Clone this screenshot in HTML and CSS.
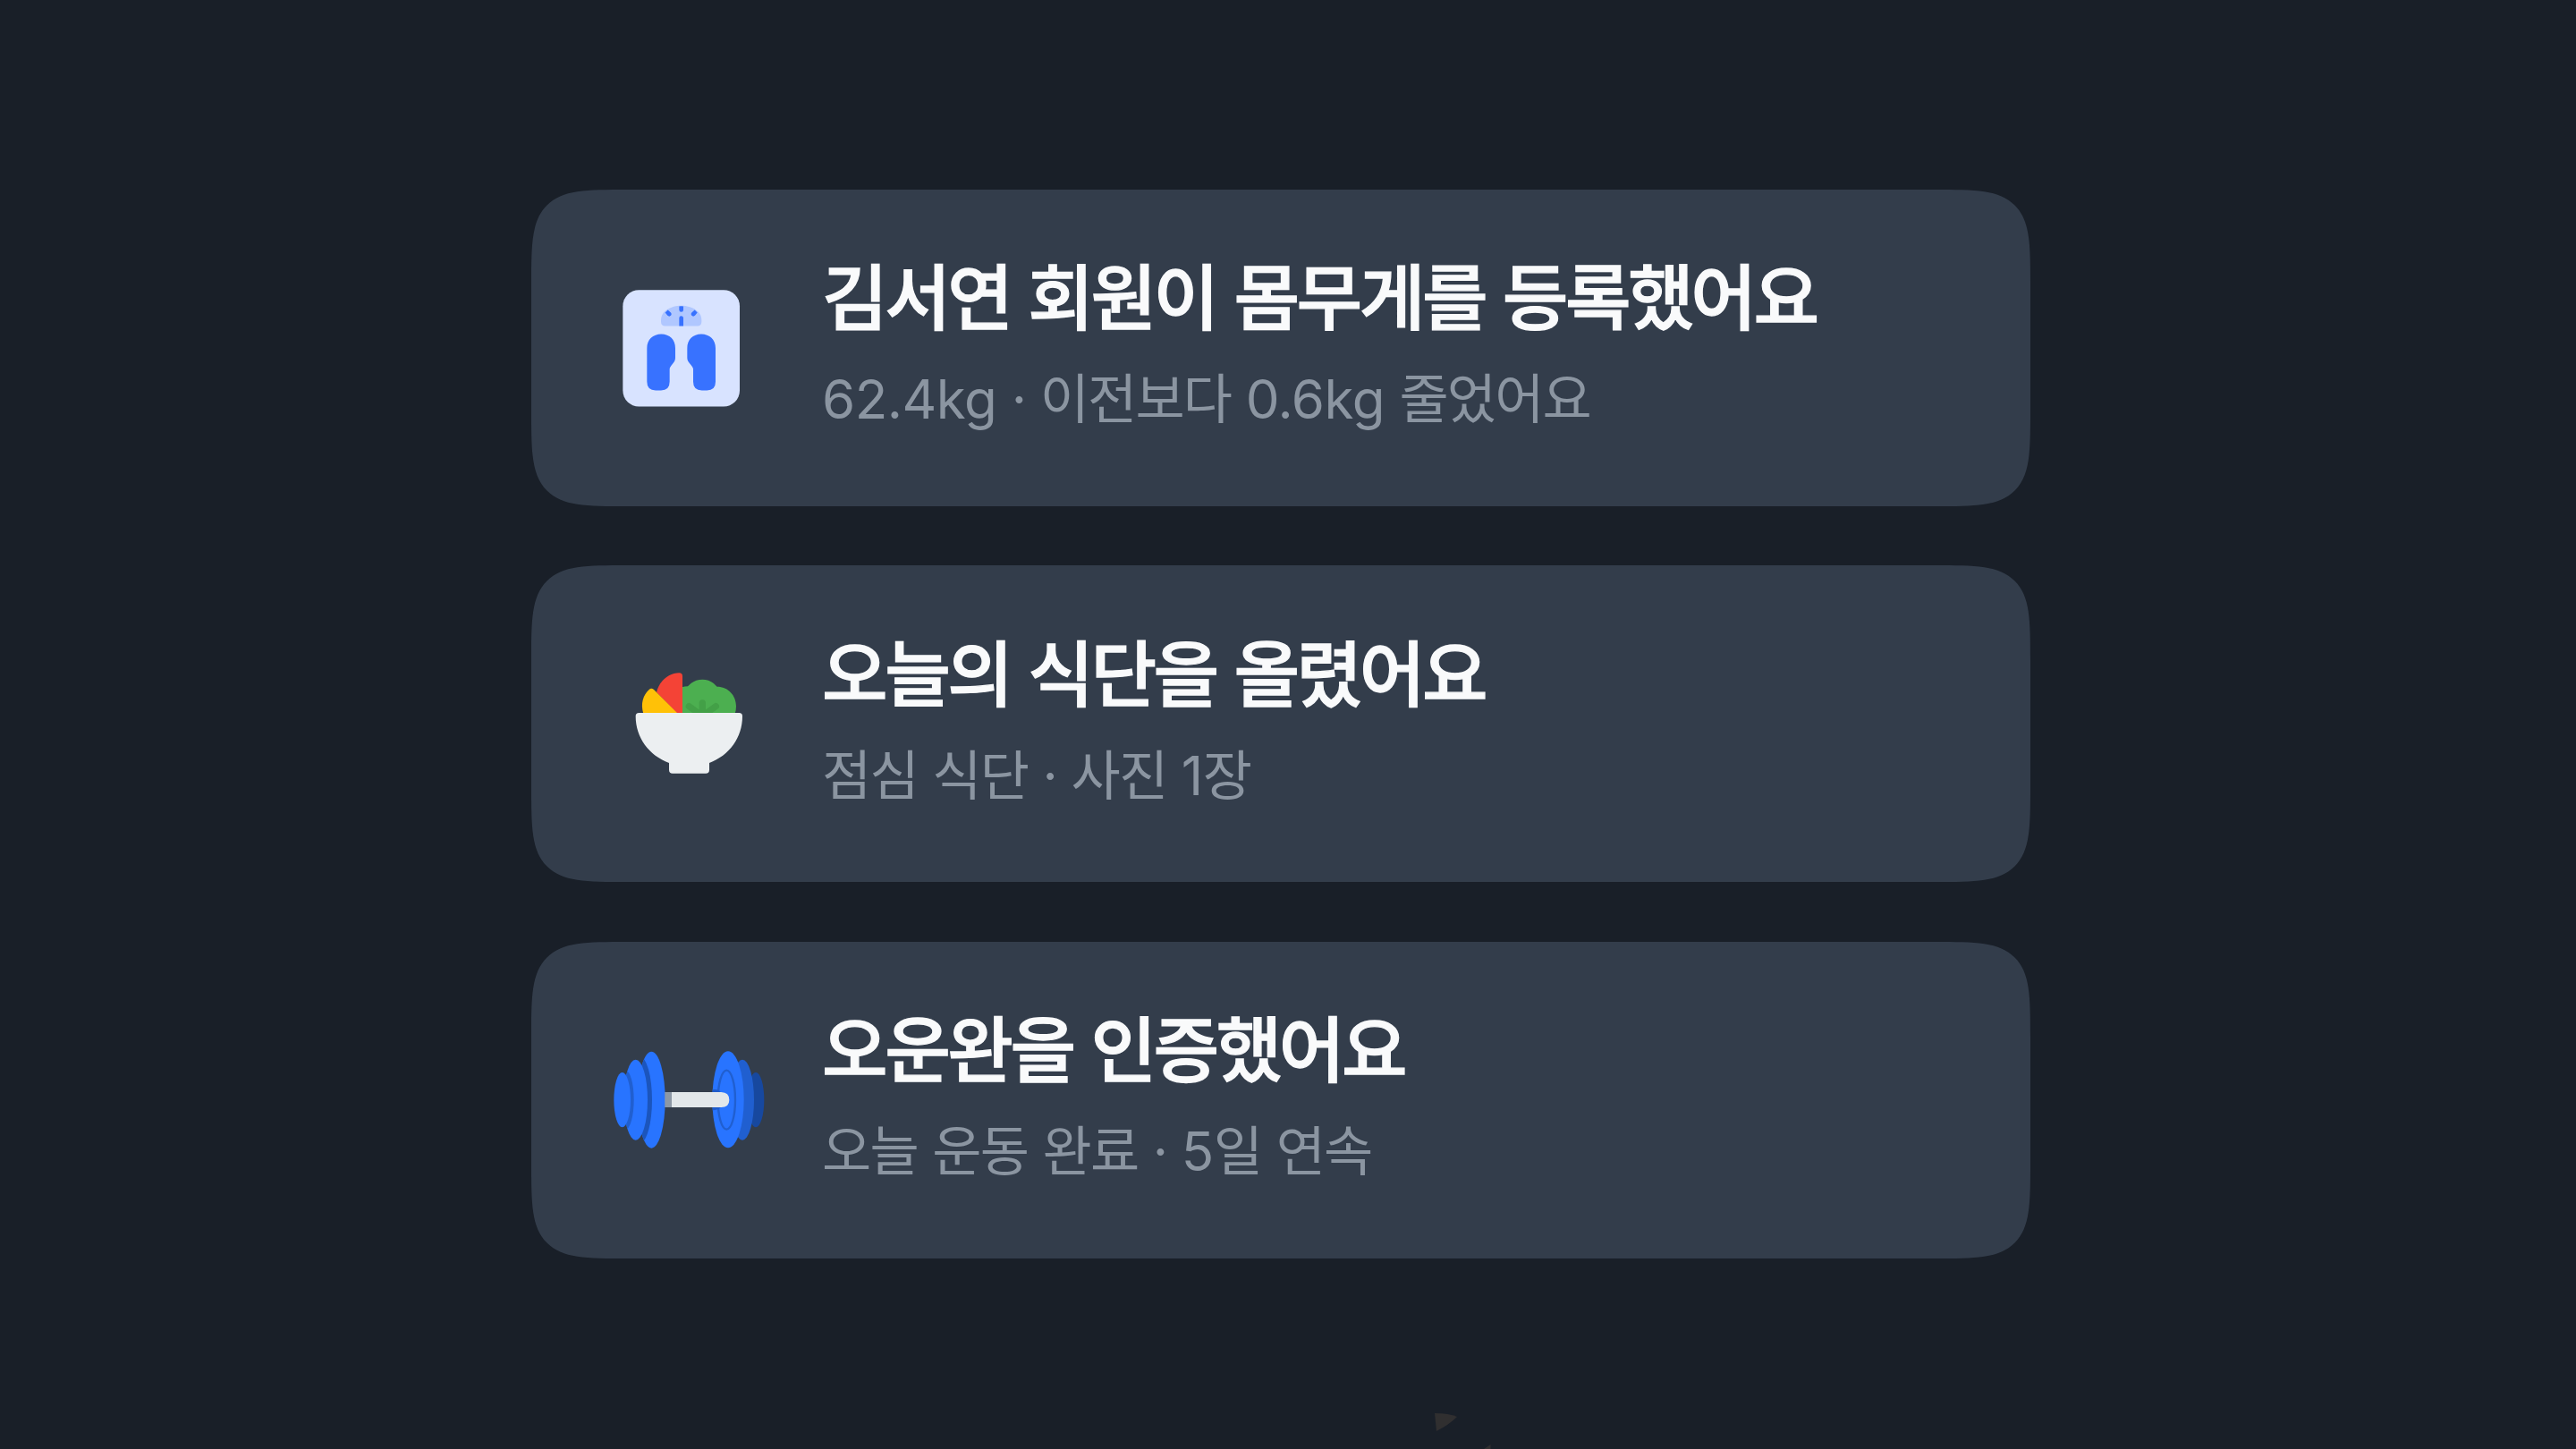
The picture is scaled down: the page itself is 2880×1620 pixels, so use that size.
FILE: index.html
```
<!DOCTYPE html>
<html lang="ko">

<head>
    <meta charset="UTF-8">
    <meta name="viewport" content="width=device-width, initial-scale=1.0">
    <title>회원 알림</title>
    <link rel="stylesheet" href="styles.css">
</head>

<body>
    <main class="feed">
        <!-- Weight -->
        <section class="card">
            <svg class="card-icon" viewBox="-30 25.5 600 420" aria-hidden="true">
                <rect x="49" y="41" width="392" height="391" rx="54" fill="#d8e3ff" />
                <path d="M177 142C177 112 211 94 245 94S313 112 313 142V148Q313 162 299 162H191Q177 162 177 148Z" fill="#b0c7ff" />
                <path d="M238 96Q245 94 252 96V108Q252 115 245 115T238 108ZM238 162V135Q238 128 245 128T252 135V162Z" fill="#3872ff" />
                <path d="M191 117L200 108L210 117Q214 122 210 127Q205 132 199 127ZM299 117L290 108L280 117Q276 122 280 127Q285 132 291 127Z" fill="#3872ff" />
                <path d="M130 236C130 208 150 189 178 189S225 208 225 236V269C225 286 206 294 206 307V349Q206 378 177 378H159Q130 378 130 349Z" fill="#3872ff" />
                <path d="M360 236C360 208 340 189 312 189S265 208 265 236V269C265 286 285 294 285 307V349Q285 378 314 378H331Q360 378 360 349Z" fill="#3872ff" />
            </svg>
            <div class="card-text">
                <h2>김서연 회원이 몸무게를 등록했어요</h2>
                <p><span class="num">62.4kg</span> · 이전보다 <span class="num">0.6kg</span> 줄었어요</p>
            </div>
        </section>

        <!-- Meal -->
        <section class="card">
            <svg class="card-icon" viewBox="-60 28 600 420" aria-hidden="true">
                <path d="M217 116Q227 113 237 113Q257 90 286 90T335 114C372 114 399 143 399 180Q399 193 395 205H217Z" fill="#4caf50" />
                <path d="M286 214V169M286 213L241 180M286 213L331 180" fill="none" stroke="#43a047" stroke-width="22" stroke-linecap="round" />
                <path d="M132 133C142 92 176 68 208 68Q219 68 219 79V205H202Z" fill="#f44336" />
                <path d="M88 205C78 171 86 143 108 123Q115 117 123 124L204 205Z" fill="#ffc107" />
                <path d="M73 202H409Q420 202 420 213C420 285 376 344 309 370V393Q309 405 297 405H186Q174 405 174 393V370C107 344 62 285 62 213Q62 202 73 202Z" fill="#eceff1" />
            </svg>
            <div class="card-text">
                <h2>오늘의 식단을 올렸어요</h2>
                <p>점심 식단 · 사진 <span class="num">1</span>장</p>
            </div>
        </section>

        <!-- Workout -->
        <section class="card">
            <svg class="card-icon" viewBox="0 0 600 420" aria-hidden="true">
                <clipPath id="plate-middle">
                    <ellipse cx="122" cy="209" rx="40" ry="135" />
                </clipPath>
                <clipPath id="plate-inner">
                    <ellipse cx="175" cy="209" rx="46" ry="162" />
                </clipPath>
                <clipPath id="plate-right">
                    <ellipse cx="432" cy="208" rx="53" ry="162" />
                </clipPath>
                <ellipse cx="175" cy="209" rx="46" ry="162" fill="#2874ff" />
                <ellipse cx="136" cy="209" rx="41" ry="145" fill="#1b55bd" clip-path="url(#plate-inner)" />
                <ellipse cx="122" cy="209" rx="40" ry="135" fill="#2874ff" />
                <ellipse cx="88" cy="209" rx="28" ry="99" fill="#205fd0" clip-path="url(#plate-middle)" />
                <ellipse cx="77" cy="209" rx="28" ry="92" fill="#2874ff" />
                <ellipse cx="525" cy="209" rx="28" ry="92" fill="#17489f" />
                <ellipse cx="480" cy="209" rx="39" ry="135" fill="#205fd0" />
                <ellipse cx="432" cy="208" rx="53" ry="162" fill="#2874ff" />
                <ellipse cx="427" cy="209" rx="29" ry="99" fill="none" stroke="#205fd0" stroke-width="7" />
                <path d="M370 174H388Q400 174 407 183V234Q400 243 370 245Z" fill="#1d5bcb" clip-path="url(#plate-right)" />
                <path d="M221 183H409Q436 184 436 209T409 234H221Z" fill="#e2e7ea" />
                <path d="M221 183H243V234H221Z" fill="#8d98a5" />
            </svg>
            <div class="card-text">
                <h2>오운완을 인증했어요</h2>
                <p>오늘 운동 완료 · <span class="num">5</span>일 연속</p>
            </div>
        </section>
    </main>

    <!-- Confetti coming up from the bottom edge -->
    <svg class="confetti" viewBox="0 0 70 45" aria-hidden="true">
        <path d="M4 5Q20 5 29 9Q20 18 6 25Z" />
        <path d="M59 45L66.500 40V45Z" />
    </svg>
</body>

</html>
```
FILE: styles.css
```
* {
  box-sizing: border-box;
}
body {
  margin: 0;
  height: 1620px;
  background: #191f28;
  font-family: Inter, 'Noto Sans CJK KR', sans-serif;
  overflow: hidden;
}
.feed {
  width: 1675.5px;
  margin-left: 594px;
  padding-top: 211.5px;
  display: flex;
  flex-direction: column;
  gap: 66.5px;
}
.card {
  height: 354px;
  padding: 0 76px;
  display: flex;
  align-items: center;
  gap: 49px;
  background: #333d4b;
  border-radius: 110px;
  corner-shape: squircle;
}
.card-icon {
  width: 200px;
  height: 140px;
  flex: none;
}
.card-text {
  white-space: nowrap;
  padding-bottom: 13px;
}
h2 {
  margin: 0;
  color: #f9fafb;
  font-size: 80px;
  font-weight: 500;
  line-height: 120px;
  letter-spacing: -3.45px;
  word-spacing: 1.9px;
  -webkit-text-stroke: 1.3px #f9fafb;
}
p {
  margin: 8px 0 0;
  color: #8b95a1;
  font-size: 60px;
  font-weight: 400;
  line-height: 90px;
  letter-spacing: -1.8px;
  word-spacing: 1.4px;
}
.num {
  letter-spacing: -0.5px;
}
/* Sits on top of the page, cut off by the bottom edge */
.confetti {
  position: absolute;
  left: 1600px;
  top: 1575px;
  width: 70px;
  height: 45px;
  fill: #302f30;
}
```
